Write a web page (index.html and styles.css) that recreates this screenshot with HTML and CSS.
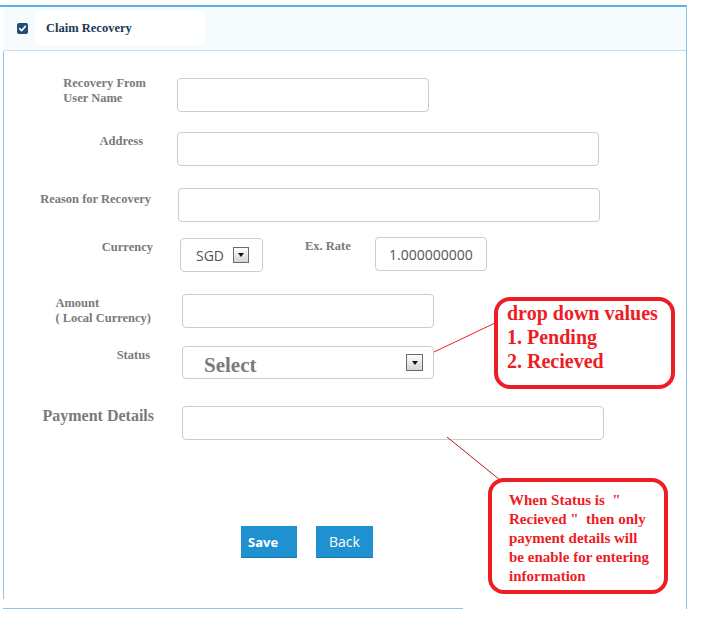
FILE: index.html
```html
<!DOCTYPE html>
<html>
<head>
<meta charset="utf-8">
<title>Claim Recovery</title>
<link rel="stylesheet" href="styles.css">
</head>
<body>
<div class="panel">
  <div class="panel-head">
    <svg class="chk" width="11" height="11" viewBox="0 0 11 11"><rect x="0" y="0" width="11" height="11" rx="2" fill="#1f4d78"/><path d="M2.6 5.6 L4.6 7.6 L8.4 3.4" fill="none" stroke="#fff" stroke-width="1.6" stroke-linecap="round" stroke-linejoin="round"/></svg>
    <div class="title-box">Claim Recovery</div>
  </div>
  <div class="panel-body">
    <div class="row r1">
      <div class="lbl"><span>Recovery From<br>User Name</span></div>
      <input class="field w-user" type="text">
    </div>
    <div class="row r2">
      <div class="lbl"><span>Address</span></div>
      <input class="field w-wide" type="text">
    </div>
    <div class="row r3">
      <div class="lbl"><span>Reason for Recovery</span></div>
      <input class="field w-wide" type="text">
    </div>
    <div class="row r4">
      <div class="lbl"><span>Currency</span></div>
      <div class="field select sel-cur"><span class="sel-text">SGD</span><span class="arrow"></span></div>
      <div class="lbl-inline">Ex. Rate</div>
      <div class="field rate">1.000000000</div>
    </div>
    <div class="row r5">
      <div class="lbl"><span>Amount<br>( Local Currency)</span></div>
      <input class="field w-user" type="text">
    </div>
    <div class="row r6">
      <div class="lbl"><span>Status</span></div>
      <div class="field select sel-status"><span class="sel-big">Select</span><span class="arrow arrow-lg"></span></div>
    </div>
    <div class="row r7">
      <div class="lbl lbl-big"><span>Payment Details</span></div>
      <input class="field w-wide" type="text">
    </div>
    <div class="actions">
      <button class="btn btn-save">Save</button>
      <button class="btn btn-back">Back</button>
    </div>
  </div>
  <div class="panel-foot"></div>
</div>

<svg class="connectors" width="702" height="618" viewBox="0 0 702 618">
  <line x1="434" y1="352" x2="495" y2="323" stroke="#ee1c25" stroke-width="1"/>
  <line x1="447" y1="437" x2="500" y2="480" stroke="#b01c25" stroke-width="1"/>
</svg>
<div class="callout callout-1">drop down values<br>1. Pending<br>2. Recieved</div>
<div class="callout callout-2">When Status is  "<br>Recieved "  then only<br>payment details will<br>be enable for entering<br>information</div>
</body>
</html>
```

FILE: styles.css
```css
html, body {
  margin: 0;
  padding: 0;
  background: #ffffff;
}
body {
  position: relative;
  width: 702px;
  height: 618px;
  overflow: hidden;
  font-family: "Liberation Serif", "Times New Roman", serif;
}
.panel {
  margin-top: 5px;
  width: 687px;
  border-top: 2px solid #5ab3e5;
  border-right: 1px solid #86c3e7;
  box-sizing: border-box;
}
.panel-head {
  height: 43px;
  background: #f6fbfe;
  border-bottom: 1px solid #bfe2f6;
  margin-left: 4px;
  display: flex;
  align-items: center;
  padding-left: 13px;
}
.chk {
  display: block;
  margin-top: -1px;
}
.title-box {
  margin-left: 7px;
  width: 170px;
  height: 34px;
  background: #ffffff;
  box-sizing: border-box;
  padding-left: 11px;
  display: flex;
  align-items: center;
  font-weight: bold;
  font-size: 12.5px;
  color: #1a3756;
  margin-top: -1px;
}
.panel-body {
  margin-left: 3px;
  border-left: 1px solid #8fc8e8;
  padding-top: 27px;
  padding-bottom: 42px;
}
.panel-foot {
  margin-left: 3px;
  margin-top: 9px;
  width: 460px;
  border-top: 1px solid #8cc5e6;
  height: 0;
}
.row {
  display: flex;
  align-items: flex-start;
}
.lbl {
  width: 153px;
  box-sizing: border-box;
  text-align: right;
  font-weight: bold;
  font-size: 12.5px;
  line-height: 15px;
  color: #7a7a7a;
  flex: none;
}
.lbl span {
  display: inline-block;
  text-align: left;
}
.lbl-big {
  font-size: 16px;
  line-height: 18px;
}
.field {
  box-sizing: border-box;
  height: 34px;
  border: 1px solid #cccccc;
  border-radius: 4px;
  background: #fff;
  margin: 0;
  padding: 0;
  font-family: "Open Sans", sans-serif;
  font-size: 14px;
  color: #555;
  flex: none;
}
.w-user { width: 252px; }
.w-wide { width: 422px; }

.r1 { margin-top: 0; }
.r1 .lbl { padding-right: 11px; margin-top: -2px; }
.r1 .field { margin-left: 20px; }

.r2 { margin-top: 20px; }
.r2 .lbl { padding-right: 14px; padding-top: 2px; }
.r2 .field { margin-left: 20px; }

.r3 { margin-top: 22px; }
.r3 .lbl { padding-right: 6px; padding-top: 4px; }
.r3 .field { margin-left: 21px; }

.r4 { margin-top: 15px; }
.r4 .lbl { padding-right: 4px; padding-top: 3px; }
.sel-cur {
  margin-left: 23px;
  margin-top: 1px;
  width: 83px;
}
.lbl-inline {
  margin-left: 42px;
  width: 45px;
  white-space: nowrap;
  padding-top: 2px;
  font-weight: bold;
  font-size: 12.5px;
  line-height: 15px;
  color: #7a7a7a;
  flex: none;
}
.rate {
  margin-left: 25px;
  width: 112px;
  display: flex;
  align-items: center;
  padding-left: 13px;
}

.r5 { margin-top: 22px; }
.r5 .lbl { padding-right: 6px; padding-top: 2px; }
.r5 .field { margin-left: 25px; }

.r6 { margin-top: 18px; }
.r6 .lbl { padding-right: 7px; padding-top: 2px; }
.sel-status {
  margin-left: 25px;
  width: 252px;
  height: 33px;
}

.r7 { margin-top: 27px; }
.r7 .lbl { padding-right: 6px; padding-top: 1px; width: 156px; }
.r7 .field { margin-left: 22px; }

.select {
  display: flex;
  align-items: center;
  position: relative;
}
.sel-text {
  padding-left: 15px;
  padding-top: 1px;
}
.arrow {
  position: absolute;
  left: 52px;
  top: 8px;
  width: 16px;
  height: 16px;
  box-sizing: border-box;
  border: 1px solid #6b6b6b;
  background: linear-gradient(#fdfdfd, #d4d4d4);
}
.arrow::after {
  content: "";
  position: absolute;
  left: 4px;
  top: 5px;
  border-left: 3.5px solid transparent;
  border-right: 3.5px solid transparent;
  border-top: 4px solid #111;
}
.arrow-lg {
  left: 223px;
  top: 7px;
  width: 17px;
  height: 17px;
}
.arrow-lg::after {
  left: 4.5px;
  top: 6px;
}
.sel-big {
  font-family: "Liberation Serif", "Times New Roman", serif;
  font-weight: bold;
  font-size: 21px;
  color: #7b7b7b;
  padding-left: 21px;
  padding-top: 6px;
}

.actions {
  display: flex;
  gap: 19px;
  margin-top: 86px;
  padding-left: 237px;
}
.btn {
  height: 31px;
  border: none;
  border-radius: 0;
  background: #1f91d0;
  color: #ffffff;
  font-family: "Open Sans", sans-serif;
  margin: 0;
  padding: 0;
  box-shadow: 0 1px 0 #1676ad;
}
.btn-save {
  width: 56px;
  font-size: 13px;
  font-weight: bold;
  text-align: left;
  padding-left: 7px;
}
.btn-back {
  width: 57px;
  font-size: 14px;
}

.connectors {
  position: absolute;
  left: 0;
  top: 0;
  pointer-events: none;
}
.callout {
  position: absolute;
  box-sizing: border-box;
  border: 4px solid #ee1c25;
  border-radius: 16px;
  background: #ffffff;
  color: #ee1c25;
  font-family: "Liberation Serif", "Times New Roman", serif;
  font-weight: bold;
  white-space: pre;
}
.callout-1 {
  left: 494px;
  top: 297px;
  width: 181px;
  height: 92px;
  padding-left: 9px;
  font-size: 20px;
  line-height: 24px;
}
.callout-2 {
  left: 488px;
  top: 478px;
  width: 180px;
  height: 116px;
  padding-left: 17px;
  padding-top: 9px;
  font-size: 15px;
  line-height: 19px;
}
```
